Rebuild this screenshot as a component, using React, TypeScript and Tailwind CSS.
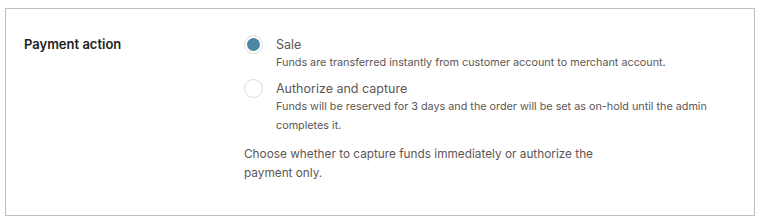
import { useState } from "react";

const options = [
  {
    id: "sale",
    label: "Sale",
    description:
      "Funds are transferred instantly from customer account to merchant account.",
  },
  {
    id: "authorize",
    label: "Authorize and capture",
    description:
      "Funds will be reserved for 3 days and the order will be set as on-hold until the admin completes it.",
  },
];

function Radio({ checked }: { checked: boolean }) {
  return (
    <span className="flex h-[19px] w-[19px] shrink-0 items-center justify-center rounded-full border border-[#dcdcdc] bg-white">
      {checked && <span className="h-[13px] w-[13px] rounded-full bg-[#4a87a4]" />}
    </span>
  );
}

export default function App() {
  const [value, setValue] = useState("sale");

  return (
    <div className="bg-white pl-[5px] pt-[8px] font-['Inter',sans-serif]">
      <div className="flex h-[208px] w-[750px] border border-[#bdbdbd] bg-white">
        <div className="w-[238px] shrink-0 pl-[18px] pt-[26px] text-[13px] leading-[19px] font-semibold text-[#1e1e1e]">
          Payment action
        </div>
        <div className="flex flex-col pt-[26px]">
          <div className="flex flex-col gap-[7px]">
            {options.map((opt) => (
              <label
                key={opt.id}
                className="flex cursor-pointer gap-[13px]"
                onClick={() => setValue(opt.id)}
              >
                <Radio checked={value === opt.id} />
                <div className="flex flex-col">
                  <span className="text-[12.5px] leading-[19px] text-[#5d5656]">
                    {opt.label}
                  </span>
                  <span className="mt-[-1px] max-w-[450px] text-[10.8px] leading-[19px] text-[#5d5656]">
                    {opt.description}
                  </span>
                </div>
              </label>
            ))}
          </div>
          <p className="mt-[10px] max-w-[380px] text-[11.8px] leading-[19px] text-[#5d5656]">
            Choose whether to capture funds immediately or authorize the payment only.
          </p>
        </div>
      </div>
    </div>
  );
}
